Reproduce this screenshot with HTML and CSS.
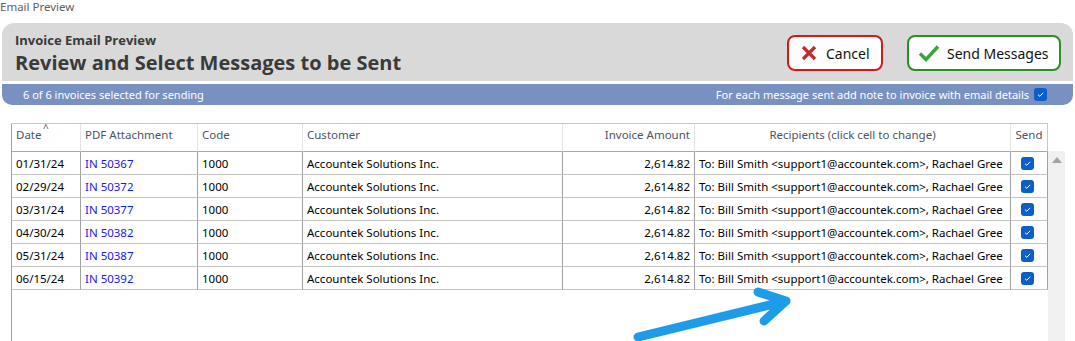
FILE: index.html
```html
<!DOCTYPE html>
<html>
<head>
<meta charset="utf-8">
<link rel="stylesheet" href="styles.css">
</head>
<body>
<div class="window-title">Email Preview</div>
<div class="panel">
  <div class="panel-top">
    <div class="titles">
      <div class="subtitle">Invoice Email Preview</div>
      <div class="title">Review and Select Messages to be Sent</div>
    </div>
    <div class="buttons">
      <button class="btn btn-cancel">
        <svg width="16" height="16" viewBox="0 0 16 16"><path d="M2 2 L14 14 M14 2 L2 14" stroke="#c8282d" stroke-width="3.2" stroke-linecap="butt"/></svg>
        <span>Cancel</span>
      </button>
      <button class="btn btn-send">
        <svg width="22" height="18" viewBox="0 0 22 18"><path d="M2 9.5 L8 15.5 L20 2.5" fill="none" stroke="#3aa53a" stroke-width="3.4" stroke-linejoin="miter"/></svg>
        <span>Send Messages</span>
      </button>
    </div>
  </div>
  <div class="panel-bar">
    <span>6 of 6 invoices selected for sending</span>
    <span class="bar-right">For each message sent add note to invoice with email details <span class="cb"><svg width="13" height="13" viewBox="0 0 13 13"><path d="M4 6.7 L5.8 8.3 L9.1 4.8" fill="none" stroke="#fff" stroke-width="1"/></svg></span></span>
  </div>
</div>

<div class="grid-wrap">
  <div class="grid">
    <div class="hc">Date<span class="sort">^</span></div>
    <div class="hc">PDF Attachment</div>
    <div class="hc">Code</div>
    <div class="hc">Customer</div>
    <div class="hc right">Invoice Amount</div>
    <div class="hc center">Recipients (click cell to change)</div>
    <div class="hc center last">Send</div>

    <div class="c">01/31/24</div><div class="c link">IN 50367</div><div class="c">1000</div><div class="c">Accountek Solutions Inc.</div><div class="c right">2,614.82</div><div class="c">To: Bill Smith &lt;support1@accountek.com&gt;, Rachael Gree</div><div class="c center"><span class="cb"><svg width="13" height="13" viewBox="0 0 13 13"><path d="M4 6.7 L5.8 8.3 L9.1 4.8" fill="none" stroke="#fff" stroke-width="1"/></svg></span></div>
    <div class="c">02/29/24</div><div class="c link">IN 50372</div><div class="c">1000</div><div class="c">Accountek Solutions Inc.</div><div class="c right">2,614.82</div><div class="c">To: Bill Smith &lt;support1@accountek.com&gt;, Rachael Gree</div><div class="c center"><span class="cb"><svg width="13" height="13" viewBox="0 0 13 13"><path d="M4 6.7 L5.8 8.3 L9.1 4.8" fill="none" stroke="#fff" stroke-width="1"/></svg></span></div>
    <div class="c">03/31/24</div><div class="c link">IN 50377</div><div class="c">1000</div><div class="c">Accountek Solutions Inc.</div><div class="c right">2,614.82</div><div class="c">To: Bill Smith &lt;support1@accountek.com&gt;, Rachael Gree</div><div class="c center"><span class="cb"><svg width="13" height="13" viewBox="0 0 13 13"><path d="M4 6.7 L5.8 8.3 L9.1 4.8" fill="none" stroke="#fff" stroke-width="1"/></svg></span></div>
    <div class="c">04/30/24</div><div class="c link">IN 50382</div><div class="c">1000</div><div class="c">Accountek Solutions Inc.</div><div class="c right">2,614.82</div><div class="c">To: Bill Smith &lt;support1@accountek.com&gt;, Rachael Gree</div><div class="c center"><span class="cb"><svg width="13" height="13" viewBox="0 0 13 13"><path d="M4 6.7 L5.8 8.3 L9.1 4.8" fill="none" stroke="#fff" stroke-width="1"/></svg></span></div>
    <div class="c">05/31/24</div><div class="c link">IN 50387</div><div class="c">1000</div><div class="c">Accountek Solutions Inc.</div><div class="c right">2,614.82</div><div class="c">To: Bill Smith &lt;support1@accountek.com&gt;, Rachael Gree</div><div class="c center"><span class="cb"><svg width="13" height="13" viewBox="0 0 13 13"><path d="M4 6.7 L5.8 8.3 L9.1 4.8" fill="none" stroke="#fff" stroke-width="1"/></svg></span></div>
    <div class="c">06/15/24</div><div class="c link">IN 50392</div><div class="c">1000</div><div class="c">Accountek Solutions Inc.</div><div class="c right">2,614.82</div><div class="c">To: Bill Smith &lt;support1@accountek.com&gt;, Rachael Gree</div><div class="c center"><span class="cb"><svg width="13" height="13" viewBox="0 0 13 13"><path d="M4 6.7 L5.8 8.3 L9.1 4.8" fill="none" stroke="#fff" stroke-width="1"/></svg></span></div>
  </div>
  <div class="scrollbar"><span class="up"></span></div>
  <svg class="arrow" width="180" height="70" viewBox="0 0 180 70">
    <path d="M16 54 L164 18 M136 9 L164 18 L142 38" fill="none" stroke="#1e9be9" stroke-width="9" stroke-linecap="round" stroke-linejoin="round"/>
  </svg>
</div>
</body>
</html>
```

FILE: styles.css
```css
* { box-sizing: border-box; }
html, body { margin: 0; padding: 0; background: #fff; }
body {
  width: 1075px;
  height: 341px;
  overflow: hidden;
  font-family: "Noto Sans", "Open Sans", sans-serif;
  font-size: 11.5px;
  color: #000;
}
.window-title {
  height: 23px;
  font-size: 11.5px;
  line-height: 14px;
  color: #606060;
}
.panel {
  margin: 0 2px;
}
.panel-top {
  height: 58px;
  background: #d9d9d9;
  border-radius: 12px 12px 0 0;
  display: flex;
  justify-content: space-between;
  padding: 0 12px 0 13px;
}
.titles {
  padding-top: 9px;
  color: #3a3a3a;
  font-family: "Open Sans", sans-serif;
  font-weight: 700;
}
.subtitle { font-size: 13px; line-height: 16px; }
.title { font-size: 20px; line-height: 30px; }
.buttons {
  display: flex;
  gap: 24px;
  padding-top: 12px;
}
.btn {
  height: 36px;
  display: flex;
  align-items: center;
  background: #fff;
  border-radius: 8px;
  font-family: "Noto Sans", sans-serif;
  font-size: 14px;
  color: #111;
  padding: 0 10px 0 12px;
  gap: 9px;
  cursor: pointer;
}
.btn-cancel { width: 96px; border: 2px solid #cc1c1c; }
.btn-send { width: 154px; border: 2px solid #2a8f2a; padding-left: 9px; gap: 7px; }
.panel-bar {
  margin-top: 3px;
  height: 21px;
  background: #7991c0;
  border-radius: 0 0 10px 10px;
  color: #fff;
  font-size: 11px;
  display: flex;
  align-items: center;
  justify-content: space-between;
  padding: 0 26px 0 21px;
}
.bar-right { display: flex; align-items: center; gap: 5px; }
.cb {
  display: inline-flex;
  width: 13px;
  height: 13px;
  border-radius: 3px;
  background: #0b5fc6;
}
.grid-wrap {
  position: relative;
  margin: 18px 0 0 11px;
  display: flex;
  height: 218px;
  border-left: 1px solid #a0a0a0;
}
.grid {
  display: grid;
  grid-template-columns: 70px 117px 105px 260px 132px 316px 37px;
  grid-template-rows: 28px repeat(6, 23px);
  align-content: start;
  border-top: 1px solid #c8c8c8;
  margin-left: -1px;
}
.hc {
  color: #4b5363;
  padding: 3px 4px 0 4px;
  border-right: 1px solid #e4e4e4;
  border-bottom: 1px solid #a8a8a8;
  position: relative;
  white-space: nowrap;
}
.hc:first-child { border-left: 1px solid #a0a0a0; }
.hc.last { border-right: 1px solid #c8c8c8; }
.sort {
  position: absolute;
  left: 31px;
  top: -1px;
  font-size: 10px;
  line-height: 10px;
  color: #555;
}
.c {
  display: flex;
  align-items: center;
  padding: 0 4px;
  border-right: 1px solid #a0a0a0;
  border-bottom: 1px solid #c4c4c4;
  white-space: nowrap;
  overflow: hidden;
}
.c:nth-child(7n+1) { border-left: 1px solid #a0a0a0; }
.c.link { color: #1a1ae6; }
.c.right { justify-content: flex-end; }
.hc.right { text-align: right; }
.hc.center { text-align: center; }
.c.center { justify-content: center; padding: 0 6px 0 2px; }
.scrollbar {
  width: 17px;
  margin-top: 28px;
  background: #f0f0f0;
  position: relative;
}
.up {
  position: absolute;
  left: 4px;
  top: 6px;
  width: 0;
  height: 0;
  border-left: 5px solid transparent;
  border-right: 5px solid transparent;
  border-bottom: 6px solid #a3a3a3;
}
.arrow {
  position: absolute;
  left: 610px;
  top: 160px;
}
```
